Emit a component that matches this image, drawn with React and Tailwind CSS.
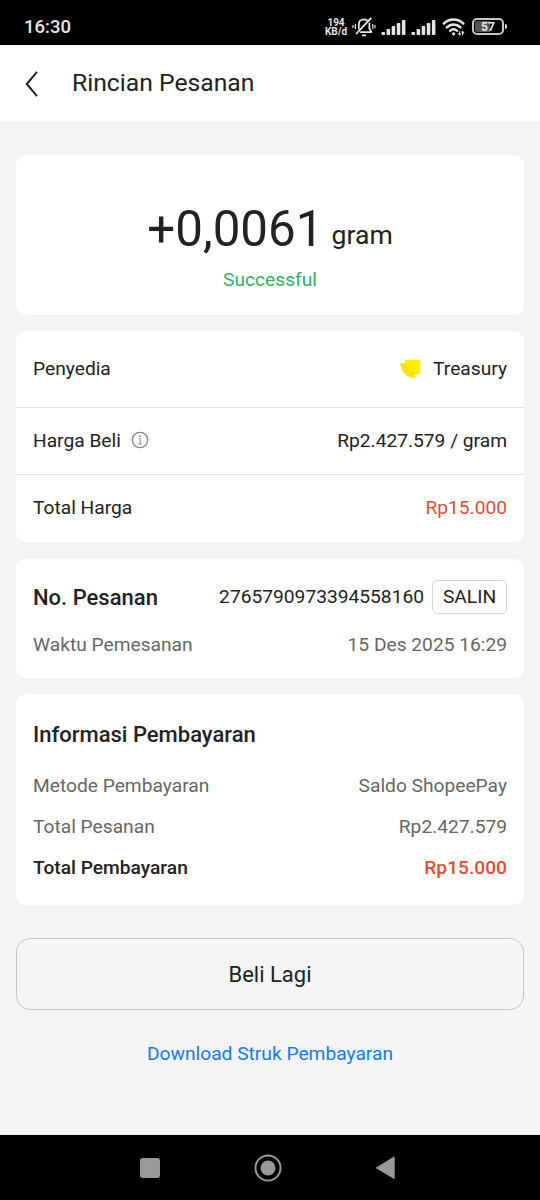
import React from "react";

const BARS = [3, 6, 9, 12, 15];

function SignalIcon() {
  return (
    <svg width="25" height="16" viewBox="0 0 25 16" fill="#e6e6e6">
      {BARS.map((h, i) => (
        <rect key={h} x={0.5 + i * 5.1} y={16 - h} width="3.5" height={h} rx="0.8" />
      ))}
    </svg>
  );
}

function MutedBellIcon() {
  return (
    <svg
      width="24"
      height="20"
      viewBox="0 0 24 20"
      fill="none"
      stroke="#e6e6e6"
      strokeWidth="1.8"
      strokeLinecap="round"
      strokeLinejoin="round"
    >
      <path d="M6.8 11.6V7.4C6.8 4.4 9 2.4 12 2.4c1.2 0 2.2.3 3 .9" />
      <path d="M17.4 6.5v5l2 3.6H8.8" />
      <path d="M10.8 18.4h2.6" />
      <path d="M4.6 16.4L18.8 1.4" />
      <path d="M3.4 7.4v4.2M1 8.4v2.2M20.8 7.4v4.2M23 8.4v2.2" strokeWidth="1.2" />
    </svg>
  );
}

function WifiIcon() {
  return (
    <svg
      width="24"
      height="18"
      viewBox="0 0 24 18"
      fill="none"
      stroke="#e6e6e6"
      strokeWidth="2.4"
      strokeLinecap="round"
    >
      <path d="M1.8 5.6C7.4.2 15.6.2 21.4 5.6" />
      <path d="M4.8 9.4c4-3.8 9.6-3.8 13.6 0" />
      <path d="M8 12.8c2.2-2 5-2 7.2 0" />
      <circle cx="11.6" cy="15.8" r="1.6" fill="#e6e6e6" stroke="none" />
      <path
        d="M17.8 13.6v3.2M16.6 15.6l1.2 1.2 .6-.6M20.6 16.8v-3.2M21.8 14.8L20.6 13.6l-.6.6"
        strokeWidth="1.1"
      />
    </svg>
  );
}

function StatusBar() {
  return (
    <div className="flex h-[45px] shrink-0 items-start justify-between bg-black pl-6 pr-[33px] text-[#e6e6e6]">
      <span className="mt-[13px] text-[18.5px] leading-7 font-medium">16:30</span>
      <div className="mt-[15px] flex h-[23px] items-center">
        <div className="w-[22px] text-center text-[10px] leading-[9px] font-bold">
          <div>194</div>
          <div className="whitespace-nowrap">KB/d</div>
        </div>
        <div className="ml-[5px]">
          <MutedBellIcon />
        </div>
        <div className="ml-[5px]">
          <SignalIcon />
        </div>
        <div className="ml-[5px]">
          <SignalIcon />
        </div>
        <div className="ml-[6px]">
          <WifiIcon />
        </div>
        <div className="ml-[6px] flex items-center gap-px">
          <div className="flex h-[17px] w-[32px] rounded-[5px] border-2 border-[#c8c8c8] bg-black p-px">
            <div className="flex flex-1 items-center justify-center rounded-[2px] bg-linear-to-r from-[#555] from-57% to-black to-57% text-[12px] leading-none font-bold">
              57
            </div>
          </div>
          <div className="h-[5px] w-[2px] rounded-r bg-[#e6e6e6]" />
        </div>
      </div>
    </div>
  );
}

function Header() {
  return (
    <header className="flex h-[78px] shrink-0 items-center border-b border-[#ececec] bg-white pl-[25px]">
      <svg width="14" height="26" viewBox="0 0 14 26" fill="none" stroke="#222" strokeWidth="2">
        <path d="M12 .8L1.8 13 12 25.2" />
      </svg>
      <h1 className="ml-[33px] pb-px text-[24.7px] leading-8">Rincian Pesanan</h1>
    </header>
  );
}

function Row({ label, value, className = "" }) {
  return (
    <div className={`flex items-center justify-between px-[17px] ${className}`}>
      <div className="flex items-center">{label}</div>
      <div className="flex items-center">{value}</div>
    </div>
  );
}

function TreasuryLogo() {
  return (
    <svg width="22" height="20" viewBox="0 0 22 20">
      <path d="M.4 4.2h4L15.2 14.5v4.7C7 19.200.4 12.5.4 4.200z" fill="#ffe21a" />
      <path
        d="M6.2.8h13q1.200 0 1.200 1.200v11.500q0 1.700-1.700 1.700h-2.900C9.500 14.500 5 9 4.800 2.200q0-1.400 1.400-1.400z"
        fill="#ffee00"
      />
      <path d="M4.600 4.500c1 5.500 5.500 10 10.600 10.700" fill="none" stroke="#e6ca00" strokeWidth="0.8" />
    </svg>
  );
}

function InfoIcon() {
  return (
    <svg width="18" height="18" viewBox="0 0 18 18" fill="none" stroke="#858585" strokeWidth="1.3">
      <circle cx="9" cy="9" r="7.7" />
      <path d="M7.6 7.6H9.2v5.2M7.6 12.900h3.200" strokeWidth="1" />
      <circle cx="9" cy="5.2" r="0.9" fill="#858585" stroke="none" />
    </svg>
  );
}

function NavBar() {
  return (
    <nav className="flex h-[65px] shrink-0 items-center bg-black pl-[140px]">
      <div className="size-5 rounded-[3px] bg-[#999]" />
      <svg className="ml-[94px]" width="28" height="28" viewBox="0 0 28 28">
        <circle cx="14" cy="14" r="12.5" fill="none" stroke="#999" strokeWidth="2" />
        <circle cx="14" cy="14" r="7.5" fill="#999" />
      </svg>
      <svg className="ml-[94px]" width="19" height="24" viewBox="0 0 19 24" fill="#999">
        <path d="M.5 11.3L17.7.8q1-.5 1 .6v20.8q0 1.100-1 .5L.5 12.600q-.8-.6 0-1.300z" />
      </svg>
    </nav>
  );
}

export default function App() {
  return (
    <div className="flex h-[1200px] w-[540px] flex-col bg-[#f4f4f4] font-['Roboto',sans-serif] text-[19.2px] leading-6 text-[#222]">
      <StatusBar />
      <Header />

      <main className="flex flex-1 flex-col px-4 pt-8">
        {/* Amount */}
        <section className="flex h-40 flex-col items-center rounded-[10px] bg-white pt-[43px]">
          <div className="flex items-end gap-[8px]">
            <span className="text-[49.3px] leading-[62px]">+0,0061</span>
            <span className="pb-[5px] text-[26.6px] leading-[40px]">gram</span>
          </div>
          <div className="mt-[8px] text-[#2fb163]">Successful</div>
        </section>

        {/* Price details */}
        <section className="mt-4 rounded-[10px] bg-white">
          <Row
            className="h-[77px] border-b border-[#e5e5e5]"
            label="Penyedia"
            value={
              <>
                <TreasuryLogo />
                <span className="ml-[11px]">Treasury</span>
              </>
            }
          />
          <Row
            className="h-[67px] border-b border-[#e5e5e5]"
            label={
              <>
                <span className="mr-[10px]">Harga Beli</span>
                <span className="pb-[3px]">
                  <InfoIcon />
                </span>
              </>
            }
            value="Rp2.427.579 / gram"
          />
          <Row
            className="h-[67px] pb-px"
            label="Total Harga"
            value={<span className="text-[#e54d2e]">Rp15.000</span>}
          />
        </section>

        {/* Order number */}
        <section className="mt-[17px] h-[119px] rounded-[10px] bg-white pt-[21px]">
          <Row
            className="h-[34px]"
            label={<span className="pt-px text-[22px] font-medium">No. Pesanan</span>}
            value={
              <>
                <span>2765790973394558160</span>
                <button className="ml-2 h-[34px] w-[75px] rounded-[5px] border border-[#d8d8d8]">
                  SALIN
                </button>
              </>
            }
          />
          <Row
            className="mt-[19px] h-6 text-[#666]"
            label="Waktu Pemesanan"
            value="15 Des 2025 16:29"
          />
        </section>

        {/* Payment info */}
        <section className="mt-4 h-[211px] rounded-[10px] bg-white pt-[29px]">
          <h2 className="px-[17px] text-[22px] leading-6 font-medium">Informasi Pembayaran</h2>
          <Row
            className="mt-[27px] h-6 text-[#666]"
            label="Metode Pembayaran"
            value="Saldo ShopeePay"
          />
          <Row className="mt-[17px] h-6 text-[#666]" label="Total Pesanan" value="Rp2.427.579" />
          <Row
            className="mt-[17px] h-6 font-medium"
            label="Total Pembayaran"
            value={<span className="text-[#e54d2e]">Rp15.000</span>}
          />
        </section>

        <button className="mt-[33px] h-[72px] rounded-[14px] border border-[#c4c4c4] pt-px text-[22px]">
          Beli Lagi
        </button>
        <a className="mt-[32px] text-center text-[#0f7df0]">Download Struk Pembayaran</a>
      </main>

      <NavBar />
    </div>
  );
}
